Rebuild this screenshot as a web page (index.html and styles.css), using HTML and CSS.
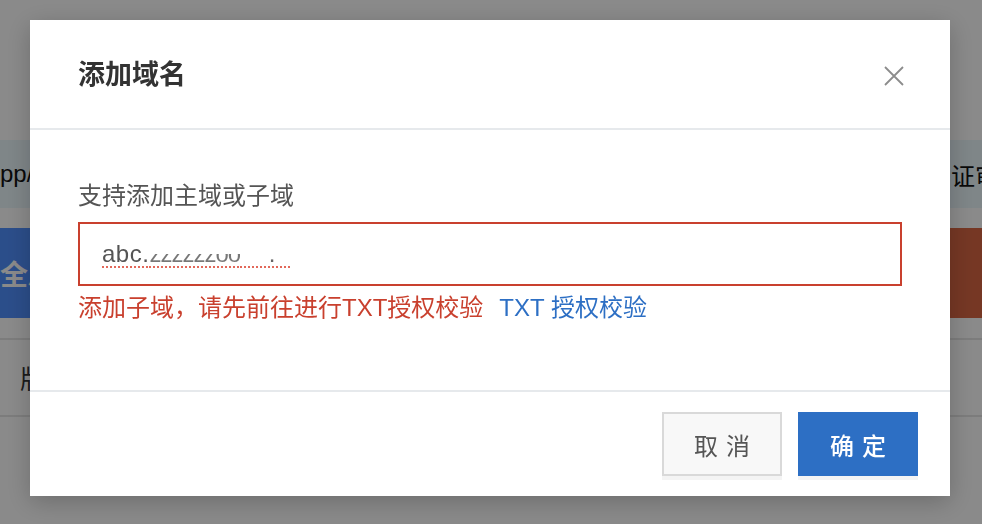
FILE: index.html
```html
<!DOCTYPE html>
<html lang="zh-CN">
<head>
<meta charset="utf-8">
<title>添加域名</title>
<link rel="stylesheet" href="styles.css">
</head>
<body>
<div class="page">
  <div class="notice">
    <span class="notice-left">pp/.</span>
    <span class="notice-right">证审</span>
  </div>
  <div class="actions">
    <div class="btn-global">全局配置</div>
    <div class="btn-danger">删除</div>
  </div>
  <div class="table-row">
    <span class="cell">版本</span>
  </div>
</div>

<div class="mask">
  <div class="modal">
    <div class="modal-header">
      <h2 class="modal-title">添加域名</h2>
      <span class="close">
        <svg width="20" height="20" viewBox="0 0 20 20"><path d="M1 1 L19 19 M19 1 L1 19" stroke="#8c8c8c" stroke-width="1.8" fill="none"/></svg>
      </span>
    </div>
    <div class="modal-body">
      <div class="label">支持添加主域或子域</div>
      <div class="input">
        <span class="value">abc.<span class="masked">zzzzzzoo</span><span class="masked-tail">&nbsp;&nbsp;&nbsp;&nbsp;.&nbsp;&nbsp;</span></span>
      </div>
      <div class="error">添加子域，请先前往进行TXT授权校验<a class="link">TXT 授权校验</a></div>
    </div>
    <div class="modal-footer">
      <button class="btn btn-cancel">取消</button>
      <button class="btn btn-ok">确定</button>
    </div>
  </div>
</div>
</body>
</html>
```
FILE: styles.css
```css
* { box-sizing: border-box; }
html, body {
  margin: 0;
  width: 982px;
  height: 524px;
  overflow: hidden;
  background: #ffffff;
  font-family: "Liberation Sans", "Noto Sans CJK SC", sans-serif;
}
.page {
  padding-top: 140px;
}
.notice {
  height: 68px;
  background: #ebf7fc;
  display: flex;
  align-items: center;
  font-size: 24px;
  color: #111;
  white-space: nowrap;
  overflow: hidden;
}
.notice-left { margin-left: 0; }
.notice-right { margin-left: auto; margin-right: -17px; }
.actions {
  margin-top: 20px;
  height: 90px;
  display: flex;
  justify-content: space-between;
}
.btn-global {
  width: 300px;
  background: #5190ff;
  color: #fff;
  font-size: 28px;
  font-weight: 700;
  display: flex;
  align-items: center;
  white-space: nowrap;
}
.btn-danger {
  width: 240px;
  background: #da6744;
  color: #fff;
  font-size: 28px;
  display: flex;
  align-items: center;
  justify-content: center;
}
.table-row {
  margin-top: 20px;
  height: 79px;
  border-top: 2px solid #e6e6e6;
  border-bottom: 2px solid #e6e6e6;
  display: flex;
  align-items: center;
  padding-left: 20px;
  font-size: 26px;
  color: #333;
}

.mask {
  position: fixed;
  inset: 0;
  background: rgba(0, 0, 0, 0.46);
  padding: 20px 0 0 30px;
}
.modal {
  width: 920px;
  height: 476px;
  background: #fff;
  box-shadow: 0 6px 24px rgba(0, 0, 0, 0.22);
  display: flex;
  flex-direction: column;
}
.modal-header {
  height: 110px;
  padding: 0 46px 0 48px;
  display: flex;
  align-items: center;
  justify-content: space-between;
  border-bottom: 2px solid #e6e9ec;
}
.modal-title {
  margin: 0;
  font-size: 27px;
  font-weight: 700;
  color: #333;
  line-height: 36px;
  margin-top: 1px;
}
.close {
  display: flex;
  width: 20px;
  height: 20px;
  margin-top: 4px;
}
.modal-body {
  flex: 1;
  padding: 50px 48px 0 48px;
}
.label {
  font-size: 24px;
  line-height: 32px;
  color: #555;
}
.input {
  margin-top: 10px;
  height: 64px;
  border: 2px solid #c9402e;
  padding: 0 22px;
  display: flex;
  align-items: center;
  font-size: 24px;
  letter-spacing: 0.5px;
  color: #555;
}
.value {
  text-decoration: underline dotted #e2685a;
  text-decoration-thickness: 2px;
  text-underline-offset: 4px;
  white-space: nowrap;
}
.masked {
  color: transparent;
  background: linear-gradient(to bottom, transparent 52%, #777 52%);
  -webkit-background-clip: text;
  background-clip: text;
  letter-spacing: -1px;
}
.masked-tail {
  color: #666;
}
.error {
  margin-top: 6px;
  font-size: 24px;
  line-height: 32px;
  color: #c9402e;
  white-space: nowrap;
}
.link {
  color: #2d6fc4;
  margin-left: 16px;
  cursor: pointer;
}
.modal-footer {
  height: 106px;
  border-top: 2px solid #e6e9ec;
  padding: 20px 32px 0 0;
  display: flex;
  justify-content: flex-end;
  gap: 16px;
}
.btn {
  width: 120px;
  height: 64px;
  font-family: "Liberation Sans", "Noto Sans CJK SC", sans-serif;
  font-size: 24px;
  letter-spacing: 8px;
  text-indent: 8px;
  border: 2px solid transparent;
  box-shadow: 0 4px 0 rgba(0, 0, 0, 0.045);
  padding: 0;
  cursor: pointer;
}
.btn-cancel {
  background: #f8f8f8;
  border-color: #d9d9d9;
  color: #555;
}
.btn-ok {
  background: #2d6fc4;
  border-color: #2d6fc4;
  color: #fff;
  font-weight: 500;
}
```
